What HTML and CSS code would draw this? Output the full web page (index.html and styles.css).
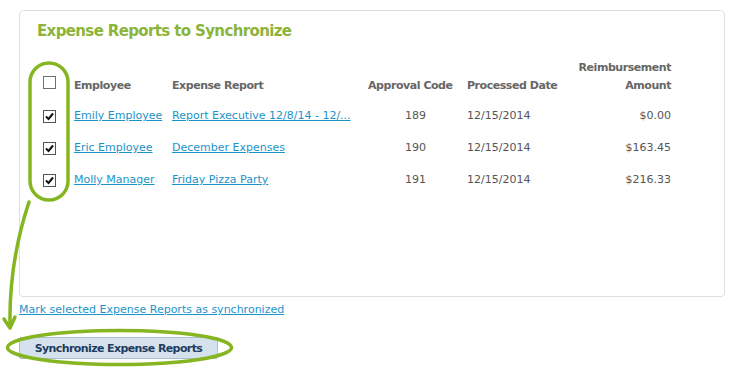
FILE: index.html
```html
<!DOCTYPE html>
<html lang="en">
<head>
  <meta charset="UTF-8" />
  <title>Expense Reports to Synchronize</title>
  <link rel="stylesheet" href="styles.css">
</head>
<body>
  <div class="page">
    <div class="panel">
      <h2 class="title">Expense Reports to Synchronize</h2>
      <table class="reports">
        <thead>
          <tr>
            <th class="col-check"><span class="cb"></span></th>
            <th class="col-emp">Employee</th>
            <th class="col-report">Expense Report</th>
            <th class="col-code">Approval Code</th>
            <th class="col-date">Processed Date</th>
            <th class="col-amount">Reimbursement Amount</th>
          </tr>
        </thead>
        <tbody id="rows"></tbody>
      </table>
    </div>

    <a href="#" class="mark-link">Mark selected Expense Reports as synchronized</a>

    <div class="actions">
      <button class="sync-btn">Synchronize Expense Reports</button>
    </div>

    <!-- green annotation marks -->
    <svg class="marks" width="745" height="370" viewBox="0 0 745 370">
      <rect x="30" y="63" width="38" height="137" rx="19" ry="19" />
      <path d="M29,202 C19,232 9,272 10,326" />
      <path d="M4,319 L10,328 L15,317" />
      <ellipse cx="119.5" cy="347.5" rx="112" ry="17" />
    </svg>
  </div>

  <script>
    const reports = [
      { employee: "Emily Employee", report: "Report Executive 12/8/14 - 12/...", code: 189, date: "12/15/2014", amount: "$0.00" },
      { employee: "Eric Employee", report: "December Expenses", code: 190, date: "12/15/2014", amount: "$163.45" },
      { employee: "Molly Manager", report: "Friday Pizza Party", code: 191, date: "12/15/2014", amount: "$216.33" }
    ];

    const tbody = document.getElementById("rows");
    const check = '<svg width="11" height="11" viewBox="0 0 11 11"><path d="M2,5.5 L4.5,8 L9,2.5" fill="none" stroke="#111" stroke-width="2"/></svg>';

    reports.forEach(r => {
      const tr = document.createElement("tr");
      tr.innerHTML = `
        <td class="col-check"><span class="cb">${check}</span></td>
        <td class="col-emp"><a href="#">${r.employee}</a></td>
        <td class="col-report"><a href="#">${r.report}</a></td>
        <td class="col-code">${r.code}</td>
        <td class="col-date">${r.date}</td>
        <td class="col-amount">${r.amount}</td>
      `;
      tbody.appendChild(tr);
    });
  </script>
</body>
</html>
```

FILE: styles.css
```css
body {
  margin: 0;
  background: #fff;
  font-family: "DejaVu Sans", Verdana, sans-serif;
  font-size: 11px;
  color: #555;
}

.page {
  position: relative;
  width: 745px;
  height: 370px;
  padding: 10px 0 0 19px;
  box-sizing: border-box;
}

.panel {
  width: 706px;
  height: 287px;
  box-sizing: border-box;
  border: 1px solid #dedede;
  border-radius: 4px;
  padding: 10px 0 0 17px;
}

.title {
  margin: 0;
  font-size: 15px;
  line-height: 20px;
  font-weight: bold;
  letter-spacing: -0.63px;
  color: #8cb43a;
}

.reports {
  margin: 18px 0 0 3px;
  border-collapse: collapse;
  table-layout: fixed;
  width: 633px;
}

.reports th {
  font-weight: bold;
  letter-spacing: -0.45px;
  color: #666;
  text-align: left;
  vertical-align: bottom;
  line-height: 18px;
  padding: 0 2px 5px;
}

.reports td {
  height: 32px;
  padding: 0 2px;
  line-height: 18px;
  vertical-align: middle;
  white-space: nowrap;
}

.reports a {
  color: #1a94c9;
}

.col-check { width: 28px; }
.col-emp { width: 94px; }
.col-report { width: 192px; }
.col-code { width: 95px; }
.col-date { width: 96px; }
.col-amount { width: 104px; }

.reports .col-code { text-align: center; }
.reports .col-amount { text-align: right; }
.reports th.col-code { text-align: left; }
.reports th.col-amount { white-space: normal; }

.cb {
  display: block;
  width: 13px;
  height: 13px;
  box-sizing: border-box;
  border: 1px solid #555;
  background: #fff;
  margin-left: 1px;
}

th .cb {
  margin-bottom: 6px;
  border-color: #707070;
}

.cb svg {
  display: block;
  margin: 0;
}

.mark-link {
  display: block;
  margin-top: 4px;
  line-height: 18px;
  color: #1a94c9;
  width: max-content;
}

.actions {
  margin-top: 18px;
}

.sync-btn {
  width: 199px;
  height: 22px;
  padding: 0;
  font-family: "DejaVu Sans", Verdana, sans-serif;
  font-size: 11px;
  font-weight: bold;
  letter-spacing: -0.6px;
  color: #1d3b5f;
  background: #d5e2ed;
  border: 1px solid #a9bfd4;
  border-radius: 2px;
}

.marks {
  position: absolute;
  left: 0;
  top: 0;
  pointer-events: none;
}

.marks rect,
.marks path,
.marks ellipse {
  fill: none;
  stroke: #86b522;
  stroke-width: 3.5;
  stroke-linecap: round;
  stroke-linejoin: round;
}
```
